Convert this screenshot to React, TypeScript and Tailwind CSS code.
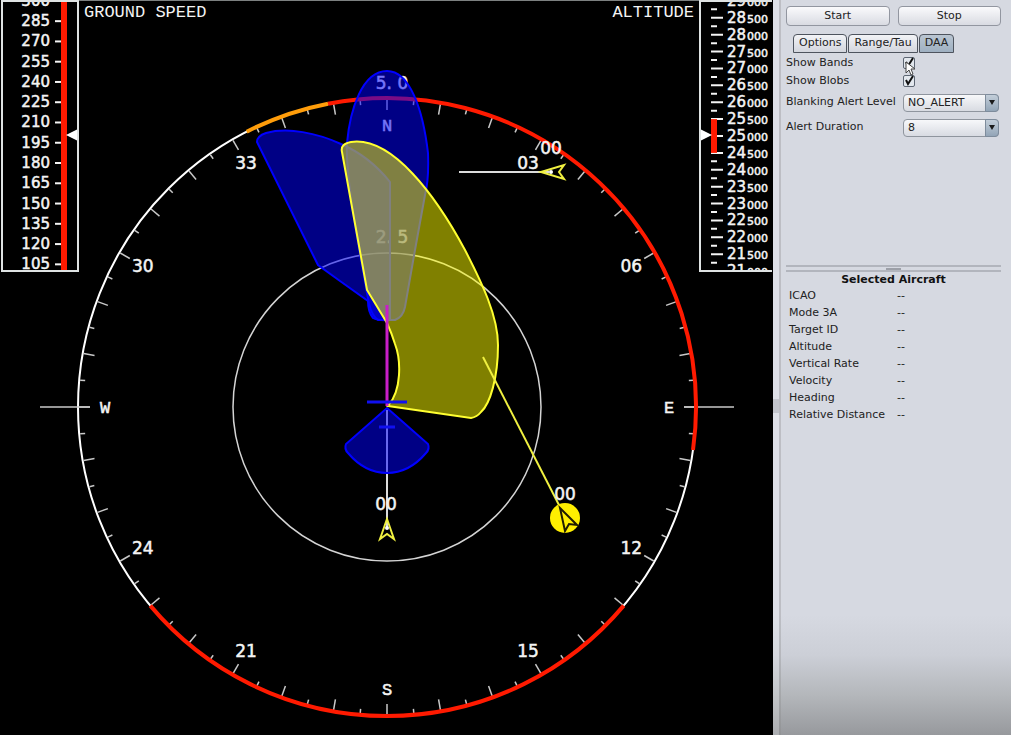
import React, { useState } from "react";

const RADIUS = 309;

const polar = (deg: number, r: number) => {
  const rad = (deg * Math.PI) / 180;
  return { x: Math.sin(rad) * r, y: -Math.cos(rad) * r };
};

const arc = (from: number, to: number) => {
  const a = polar(from, RADIUS);
  const b = polar(to, RADIUS);
  const large = to - from > 180 ? 1 : 0;
  return `M${a.x} ${a.y}A${RADIUS} ${RADIUS} 0 ${large} 1 ${b.x} ${b.y}`;
};

const bands = [
  { from: -27, to: -11, color: "#ff9d0a" },
  { from: -11, to: 98, color: "#ff1a00" },
  { from: 130, to: 230, color: "#ff1a00" },
];

const headings = ["N", "03", "06", "E", "12", "15", "S", "21", "24", "W", "30", "33"];

const aircraftFields = [
  "ICAO",
  "Mode 3A",
  "Target ID",
  "Altitude",
  "Vertical Rate",
  "Velocity",
  "Heading",
  "Relative Distance",
];

const tabs = ["Options", "Range/Tau", "DAA"];

const SpeedTape: React.FC = () => {
  const toY = (v: number) => 136 - (v - 200) * 1.351;
  const marks = Array.from({ length: 14 }, (_, i) => 300 - i * 15);

  return (
    <svg width="79" height="272" className="block shrink-0 bg-black">
      {marks.map((v) => (
        <g key={v}>
          <text
            x="50"
            y={toY(v) + 5}
            textAnchor="end"
            fill="#f4f4f4"
            stroke="#f4f4f4"
            strokeWidth="0.5"
            className="font-['DejaVu_Sans',sans-serif] text-[15px]"
          >
            {v}
          </text>
          <path d={`M55 ${toY(v)}h6`} stroke="#f4f4f4" strokeWidth="2" />
        </g>
      ))}
      <rect x="61" y="1" width="6" height="269" fill="#ff1a00" />
      <path d="M66 135l12-6v12z" fill="#fff" />
      <rect x="2" y="1" width="76" height="270" fill="none" stroke="#dfe3e3" strokeWidth="2" />
    </svg>
  );
};

const AltitudeTape: React.FC = () => {
  const toY = (v: number) => 136 - (v - 25000) * 0.03377;
  const marks = Array.from({ length: 17 }, (_, i) => 29000 - i * 500);

  return (
    <svg width="74" height="272" className="block shrink-0 bg-black">
      {marks.map((v) => (
        <g key={v}>
          <path d={`M12 ${toY(v)}h12M12 ${toY(v - 250)}h6`} stroke="#f4f4f4" strokeWidth="2" />
          <text
            x="28"
            y={toY(v) + 5}
            fill="#f4f4f4"
            stroke="#f4f4f4"
            strokeWidth="0.5"
            className="font-['DejaVu_Sans',sans-serif] text-[15px]"
          >
            {Math.floor(v / 1000)}
            <tspan dx="1" className="text-[11px]">
              {String(v % 1000).padStart(3, "0")}
            </tspan>
          </text>
        </g>
      ))}
      <rect x="12" y={toY(25500)} width="6" height={toY(24500) - toY(25500)} fill="#ff1a00" />
      <path d="M13 135l-12-6v12z" fill="#fff" />
      <path d="M73 1H1v270h72" fill="none" stroke="#dfe3e3" strokeWidth="2" />
    </svg>
  );
};

const Compass: React.FC = () => (
  <svg viewBox="0 0 773 735" className="block h-screen min-h-[480px] w-full font-['DejaVu_Sans',sans-serif]">
    <g transform="translate(387 407)" fill="none">
      <circle r={RADIUS} stroke="#fff" strokeWidth="2" />
      <circle r="154" stroke="#d4d4d4" strokeWidth="1.5" />
      {Array.from({ length: 72 }, (_, i) => i * 5).map((deg) => {
        const outer = polar(deg, RADIUS - 1);
        const inner = polar(deg, deg % 10 === 0 ? RADIUS - 12 : RADIUS - 6);
        return <path key={deg} d={`M${outer.x} ${outer.y}L${inner.x} ${inner.y}`} stroke="#c8c8c8" strokeWidth="1.5" />;
      })}
      <path d="M-347 0h50M297 0h50" stroke="#c8c8c8" strokeWidth="1.5" />
      {bands.map((b) => (
        <path key={b.from} d={arc(b.from, b.to)} stroke={b.color} strokeWidth="4" />
      ))}
      {headings.map((label, i) => {
        const p = polar(i * 30, 282);
        return (
          <text
            key={label}
            x={p.x}
            y={p.y + 6}
            textAnchor="middle"
            fill="#f4f4f4"
            stroke="#f4f4f4"
            strokeWidth="0.5"
            className={label.length === 1 ? "font-['Liberation_Mono',monospace] text-[17px]" : "text-[17px]"}
          >
            {label}
          </text>
        );
      })}
    </g>

    {/* range ring labels */}
    <g fill="#f4f4f4" stroke="#f4f4f4" strokeWidth="0.5" textAnchor="middle" className="text-[17px]">
      <text x="392" y="89">5. 0</text>
      <text x="392" y="243">2. 5</text>
    </g>

    {/* velocity vectors */}
    <path d="M387 410V528M459 172h90" stroke="#dcdcdc" strokeWidth="2" />

    {/* alerting regions */}
    <g fill="#0000ff" fillOpacity="0.52" stroke="#0000ff" strokeWidth="2">
      <path d="M257 142Q257 136 266 133C288 127 317 133 341 144C362 153 378 167 390 182L390 320Q378 321 373 318Q368 312 368 301L340 281L318 265Z" />
      <path d="M347 143C350 110 362 71 387 71C410 71 423 110 428 153Q429 180 425 195L415 250L405 307Q403 317 395 320H378Q372 316 369 304C363 270 345 180 347 143Z" />
      <path d="M387 408L428 444Q430 449 426 453C415 466 403 473 387 473C371 473 359 466 348 453Q344 449 346 444Z" />
    </g>
    <path
      d="M342 152Q340 144 351 142C392 136 436 196 465 250C482 283 498 316 498 345C498 378 490 404 481 412Q477 417 471 418L388 406C402 390 401 360 395 344Q392 334 387 323L367 290Z"
      fill="#ffff00"
      fillOpacity="0.5"
      stroke="#ffff30"
      strokeWidth="2"
    />

    {/* ownship */}
    <path d="M387 305v101" stroke="#c81ec8" strokeWidth="3" />
    <path d="M367 402h40M379 427h16" stroke="#1010f0" strokeWidth="3" />

    {/* traffic */}
    <g fill="none" stroke="#f0f040" strokeWidth="2">
      <path d="M387 519l7 20l-7-5l-7 5z" />
      <path d="M541 172l23-7l-5 7l5 7z" />
      <path d="M483 357L559 505" />
    </g>
    <circle cx="387" cy="528" r="2" fill="#fff" />
    <circle cx="551" cy="172" r="2" fill="#fff" />
    <circle cx="565" cy="518" r="15" fill="#ffee00" />
    <path d="M560 508l17 17l-8-1l-4 7z" fill="none" stroke="#201c00" strokeWidth="2" />
    <g fill="#f4f4f4" stroke="#f4f4f4" strokeWidth="0.5" textAnchor="middle" className="text-[17px]">
      <text x="551" y="154">00</text>
      <text x="386" y="510">00</text>
      <text x="565" y="500">00</text>
    </g>
  </svg>
);

const CheckRow: React.FC<{ id: string; label: string; children?: React.ReactNode }> = ({ id, label, children }) => {
  const [checked, setChecked] = useState(true);

  return (
    <div className="flex h-[18px] items-center">
      <label htmlFor={id} className="w-[117px]">
        {label}
      </label>
      <div className="relative grid">
        <input
          id={id}
          type="checkbox"
          checked={checked}
          onChange={(e) => setChecked(e.target.checked)}
          className="col-start-1 row-start-1 h-3 w-3 appearance-none rounded-xs border border-[#5d6673] bg-[#e3e8ee]"
        />
        {checked && (
          <svg viewBox="0 0 12 12" className="pointer-events-none col-start-1 row-start-1 h-3 w-3">
            <path d="M3 5l2 4l5-8" fill="none" stroke="#111" strokeWidth="2" />
          </svg>
        )}
        {children}
      </div>
    </div>
  );
};

const SelectRow: React.FC<{ id: string; label: string; options: string[] }> = ({ id, label, options }) => (
  <div className="flex h-[25px] items-center">
    <label htmlFor={id} className="w-[117px] shrink-0">
      {label}
    </label>
    <div className="relative flex-1">
      <select
        id={id}
        className="block h-[18px] w-full appearance-none rounded-sm border border-[#8f959e] bg-linear-to-b from-[#f7f8fa] to-[#d8dbe2] pr-4 pl-1 leading-4"
      >
        {options.map((o) => (
          <option key={o}>{o}</option>
        ))}
      </select>
      <span className="pointer-events-none absolute inset-y-0 right-0 flex w-[14px] items-center justify-center rounded-r-sm border border-[#7e8c9c] bg-linear-to-b from-[#c3ced9] to-[#93a5b7]">
        <svg width="6" height="5">
          <path d="M0 0h6l-3 5z" fill="#1a1a1a" />
        </svg>
      </span>
    </div>
  </div>
);

export default function App() {
  const [tab, setTab] = useState("DAA");

  return (
    <div className="flex min-h-screen bg-[linear-gradient(to_top,#97999d,#b4b7bb_40px,#cccfd7_80px,#d6d9e1_120px)] font-['DejaVu_Sans',sans-serif] text-[11px] text-[#222]">
      <main className="grid min-w-0 flex-1 border-t border-[#7c8080] bg-black">
        <div className="col-start-1 row-start-1 -mt-px">
          <Compass />
        </div>
        <div className="z-10 col-start-1 row-start-1 -mt-px flex items-start self-start font-['Liberation_Mono',monospace] text-[17px] leading-5 text-[#f4f4f4]">
          <SpeedTape />
          <h2 className="pt-[3px] pl-[5px]">GROUND SPEED</h2>
          <h2 className="ml-auto pt-[3px] pr-[5px]">ALTITUDE</h2>
          <AltitudeTape />
        </div>
      </main>

      <div className="flex w-2 shrink-0 items-center border-r-2 border-black/15 bg-white/20 pt-[76px]">
        <div className="h-[14px] w-full bg-[#c3c5cc]" />
      </div>

      <aside className="w-[230px] shrink-0 pt-[6px] pr-[10px] pl-[5px]">
        <div className="flex gap-2">
          {["Start", "Stop"].map((name) => (
            <button
              key={name}
              className="h-5 flex-1 rounded-sm border border-[#9296a0] bg-linear-to-b from-[#fafafc] to-[#d9dbe2]"
            >
              {name}
            </button>
          ))}
        </div>

        <div role="tablist" className="mt-2 flex gap-px pl-[7px]">
          {tabs.map((t) => (
            <button
              key={t}
              role="tab"
              aria-selected={t === tab}
              onClick={() => setTab(t)}
              className={`h-[19px] rounded-t-sm border border-[#4e545e] px-[5px] ${
                t === tab
                  ? "bg-linear-to-b from-[#b9c5d1] to-[#9fb0c1]"
                  : "bg-linear-to-b from-[#f2f3f6] to-[#d3d6de]"
              }`}
            >
              {t}
            </button>
          ))}
        </div>

        <section className="h-[212px] pt-px pr-0.5">
          <CheckRow id="bands" label="Show Bands">
            <svg width="10" height="15" className="pointer-events-none absolute top-1 left-0.5">
              <path d="M1 1v11l3-3l2 5l2-1l-2-5h4z" fill="#fff" stroke="#444" />
            </svg>
          </CheckRow>
          <CheckRow id="blobs" label="Show Blobs" />
          <SelectRow id="blanking" label="Blanking Alert Level" options={["NO_ALERT"]} />
          <SelectRow id="duration" label="Alert Duration" options={["8"]} />
        </section>

        <div className="flex h-[7px] items-center justify-center border-y-2 border-[#b2b5bd]">
          <div className="h-[2px] w-[15px] bg-[#9da0a8]" />
        </div>

        <table className="w-full text-left">
          <caption className="h-[15px] text-center leading-[15px] font-bold text-[#111]">Selected Aircraft</caption>
          <tbody>
            {aircraftFields.map((f) => (
              <tr key={f} className="h-[17px] leading-[17px]">
                <th scope="row" className="w-[111px] p-0 pl-[3px] font-normal">
                  {f}
                </th>
                <td className="p-0">--</td>
              </tr>
            ))}
          </tbody>
        </table>
      </aside>
    </div>
  );
}
